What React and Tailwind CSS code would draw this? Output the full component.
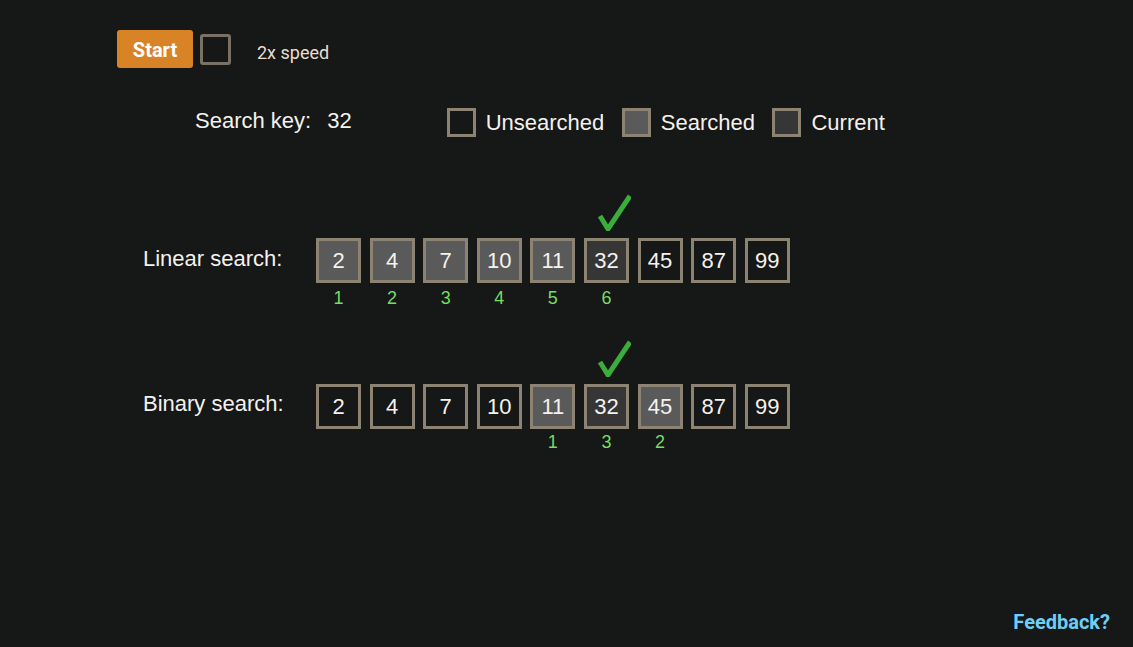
import React from "react";

const arial = { fontFamily: '"Liberation Sans", Arial, sans-serif' };
const roboto = { fontFamily: 'Roboto, "Liberation Sans", sans-serif' };

function Check() {
  return (
    <svg
      className="absolute left-[13px] bottom-[calc(100%+7px)]"
      width="34"
      height="37"
      viewBox="0 0 34 37"
    >
      <polyline
        points="3,22 11,35 33,2"
        fill="none"
        stroke="#3aad3a"
        strokeWidth="5"
        strokeLinejoin="miter"
      />
    </svg>
  );
}

function Cell({ v, state, idx, check, idxGap }) {
  const fill =
    state === "searched"
      ? "bg-[#5a5a5a]"
      : state === "current"
      ? "bg-[#363636]"
      : "bg-transparent";
  return (
    <div className="relative flex flex-col items-center w-[45px]">
      {check && <Check />}
      <div
        className={`w-[45px] h-[45px] border-[3px] border-[#8c8373] ${fill} flex items-center justify-center text-[22px] text-[#f4f2ee]`}
        style={arial}
      >
        {v}
      </div>
      <div
        className={`${idxGap} h-[18px] leading-[18px] text-[18px] text-[#76dc62]`}
        style={arial}
      >
        {idx ?? ""}
      </div>
    </div>
  );
}

const values = [2, 4, 7, 10, 11, 32, 45, 87, 99];

const linear = [
  ["searched", 1],
  ["searched", 2],
  ["searched", 3],
  ["searched", 4],
  ["searched", 5],
  ["current", 6, true],
  ["none"],
  ["none"],
  ["none"],
];

const binary = [
  ["none"],
  ["none"],
  ["none"],
  ["none"],
  ["searched", 1],
  ["current", 3, true],
  ["searched", 2],
  ["none"],
  ["none"],
];

function Row({ label, data, className, labelH, idxGap }) {
  return (
    <div className={`flex items-start ${className}`}>
      <div
        className={`w-[173px] pl-[143px] box-content ${labelH} flex items-center text-[22px] text-[#f4f2ee] whitespace-nowrap`}
        style={arial}
      >
        {label}
      </div>
      <div className="flex gap-[8.6px]">
        {values.map((v, i) => (
          <Cell
            key={i}
            v={v}
            state={data[i][0]}
            idx={data[i][1]}
            check={data[i][2]}
            idxGap={idxGap}
          />
        ))}
      </div>
    </div>
  );
}

function LegendBox({ fill }) {
  return (
    <div className={`w-[29px] h-[29px] border-[3px] border-[#8c8373] ${fill}`} />
  );
}

export default function App() {
  return (
    <div className="w-full h-[647px] bg-[#161717] flex flex-col overflow-hidden">
      <div className="flex items-center pt-[30px] pl-[117px]">
        <button
          className="w-[76px] h-[38px] rounded-[3px] bg-[#d98327] text-white font-bold text-[20px] flex items-center justify-center"
          style={roboto}
        >
          <span className="mt-[1px]">Start</span>
        </button>
        <div className="ml-[7px] w-[31px] h-[31px] rounded-[3px] border-[3px] border-[#7a7166]" />
        <span className="ml-[26px] mt-[6px] text-[18px] text-[#e9dfcf]" style={roboto}>
          2x speed
        </span>
      </div>

      <div
        className="flex items-center mt-[40px] pl-[195px] h-[30px] text-[22px] text-[#f4f2ee]"
        style={arial}
      >
        <span className="-mt-[5px]">Search key:</span>
        <span className="ml-[16px] -mt-[5px]">32</span>
        <div className="ml-[95px] flex items-center -mt-[1px]">
          <LegendBox fill="bg-transparent" />
          <span className="ml-[10px] -mt-[1px]">Unsearched</span>
          <div className="ml-[17.5px]">
            <LegendBox fill="bg-[#5a5a5a]" />
          </div>
          <span className="ml-[10px] -mt-[1px]">Searched</span>
          <div className="ml-[17.5px]">
            <LegendBox fill="bg-[#363636]" />
          </div>
          <span className="ml-[10px] -mt-[1px]">Current</span>
        </div>
      </div>

      <Row
        label="Linear search:"
        data={linear}
        className="mt-[100px]"
        labelH="h-[41px]"
        idxGap="mt-[6px]"
      />
      <Row
        label="Binary search:"
        data={binary}
        className="mt-[77px]"
        labelH="h-[39px]"
        idxGap="mt-[4px]"
      />

      <div className="mt-auto self-end pr-[23px] pb-[10px]">
        <span
          className="text-[20px] font-bold text-[#6dcff6]"
          style={roboto}
        >
          Feedback?
        </span>
      </div>
    </div>
  );
}
